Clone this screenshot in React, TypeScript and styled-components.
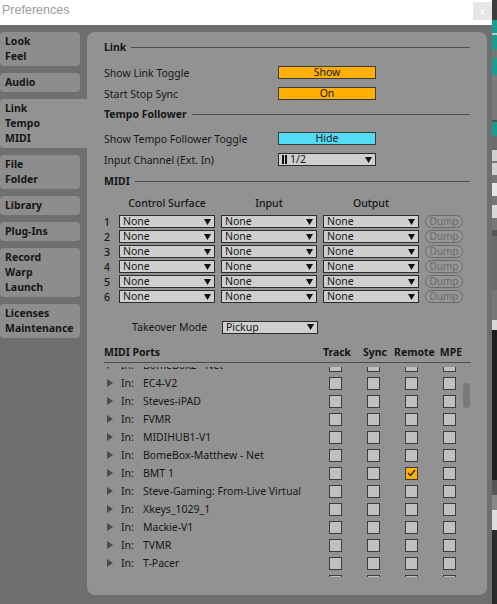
import React from 'react';
import styled, { createGlobalStyle } from 'styled-components';

const GlobalStyle = createGlobalStyle`
  html, body {
    margin: 0;
    padding: 0;
    background: #6f6f6f;
  }
  body {
    font-family: "Noto Sans", "DejaVu Sans", sans-serif;
  }
  * {
    box-sizing: border-box;
  }
`;

const PANEL = '#929292';
const INK = '#161616';

const Screen = styled.div`
  display: flex;
  width: 497px;
  height: 604px;
  overflow: hidden;
`;

const Window = styled.div`
  width: 492px;
  display: flex;
  flex-direction: column;
  background: #6f6f6f;
`;

const TitleBar = styled.div`
  height: 25px;
  flex: none;
  background: #ffffff;
  display: flex;
  align-items: flex-start;
  justify-content: space-between;
  padding-left: 2px;
`;

const Title = styled.span`
  font-family: "Liberation Sans", Arial, sans-serif;
  font-size: 12.5px;
  line-height: 21px;
  color: #9b9b9b;
`;

const CloseButton = styled.div`
  margin-top: 2px;
  width: 19px;
  height: 18px;
  background: #e6e6e6;
  color: #fbfbfb;
  font-family: "Liberation Sans", Arial, sans-serif;
  font-size: 10px;
  display: flex;
  align-items: center;
  justify-content: center;
`;

const Body = styled.div`
  flex: 1;
  display: flex;
  padding-top: 7px;
`;

const Sidebar = styled.div`
  width: 87px;
  flex: none;
  display: flex;
  flex-direction: column;
  align-items: flex-start;
  gap: 7px;
`;

const Tab = styled.div<{ $active?: boolean }>`
  width: ${p => (p.$active ? '87px' : '80px')};
  background: ${p => (p.$active ? PANEL : '#8d8d8d')};
  border-radius: ${p => (p.$active ? '4px 0 0 4px' : '4px')};
  padding: 2px 5px;
  font-size: 10.5px;
  font-weight: 700;
  line-height: 15px;
  color: ${INK};
`;

const Panel = styled.div`
  width: 400px;
  height: 563px;
  flex: none;
  background: ${PANEL};
  border-radius: 8px;
  padding: 5px 16px 0 17px;
  display: flex;
  flex-direction: column;
  font-size: 10.5px;
  color: ${INK};
`;

const SectionHeading = styled.div<{ $after?: number }>`
  height: 20px;
  display: flex;
  align-items: center;
  gap: 5px;
  font-weight: 700;
  margin-bottom: ${p => p.$after ?? 5}px;

  &::after {
    content: '';
    flex: 1;
    height: 1px;
    background: #4d4d4d;
    margin-right: 1px;
  }
`;

const SettingRow = styled.div`
  height: 21px;
  display: flex;
  align-items: center;
`;

const SettingLabel = styled.span`
  width: 174px;
`;

const ToggleButton = styled.div<{ $color: string }>`
  width: 98px;
  height: 13px;
  background: ${p => p.$color};
  border: 1px solid #3a3a3a;
  text-align: center;
  line-height: 11px;
  font-size: 10.5px;
`;

const Select = styled.div<{ $width: number }>`
  width: ${p => p.$width}px;
  height: 13px;
  background: #cfcfcf;
  border: 1px solid #2c2c2c;
  display: flex;
  align-items: center;
  gap: 3px;
  padding: 0 3px;
  font-size: 10.5px;
  line-height: 11px;

  & > span {
    flex: 1;
  }
`;

const Arrow = () => (
  <svg width="7" height="6" viewBox="0 0 7 6">
    <polygon points="0,0 7,0 3.5,6" fill="#111" />
  </svg>
);

const ChannelBars = () => (
  <svg width="5" height="9" viewBox="0 0 5 9">
    <rect x="0" y="0" width="2" height="9" fill="#111" />
    <rect x="3" y="0" width="2" height="9" fill="#111" />
  </svg>
);

const MidiGrid = styled.div`
  display: grid;
  grid-template-columns: 9px 96px 96px 96px 38px;
  column-gap: 6px;
  grid-auto-rows: 15px;
  align-items: center;
`;

const ColumnHead = styled.div`
  text-align: center;
  font-weight: 500;
`;

const MidiHeader = styled(MidiGrid)`
  margin-top: 4px;
  margin-bottom: 3px;
  grid-auto-rows: 16px;
`;

const RowNumber = styled.span`
  font-weight: 500;
`;

const DumpButton = styled.div`
  height: 13px;
  border: 1px solid #6a6a6a;
  border-radius: 7px;
  background: #969696;
  color: #6c6c6c;
  font-size: 10px;
  line-height: 11px;
  text-align: center;
`;

const TakeoverRow = styled.div`
  height: 16px;
  margin-top: 15px;
  padding-left: 28px;
  display: flex;
  align-items: center;
`;

const TakeoverLabel = styled.span`
  width: 90px;
`;

const PortsGrid = styled.div`
  display: grid;
  grid-template-columns: 1fr 38px 38px 38px 38px;
  align-items: center;
  padding-right: 3px;
`;

const PortsHeader = styled(PortsGrid)`
  margin-top: 8px;
  height: 20px;
  border-bottom: 1px solid #4d4d4d;
  padding-right: 1px;
  font-weight: 700;
  padding-bottom: 1px;

  & > span + span {
    text-align: center;
  }
`;

const PortsViewport = styled.div`
  position: relative;
  margin-top: 4px;
  height: 210px;
  overflow: hidden;
`;

const PortsList = styled.div`
  margin-top: -11px;
`;

const PortRow = styled(PortsGrid)`
  height: 18px;
`;

const PortName = styled.div`
  display: flex;
  align-items: center;
  padding-left: 3px;
  white-space: nowrap;
`;

const Disclosure = () => (
  <svg width="6" height="8" viewBox="0 0 6 8" style={{ marginRight: 8 }}>
    <polygon points="0,0 6,4 0,8" fill="#4a4a4a" />
  </svg>
);

const InLabel = styled.span`
  width: 22px;
`;

const Checkbox = styled.div<{ $checked?: boolean }>`
  justify-self: center;
  width: 13px;
  height: 13px;
  background: ${p => (p.$checked ? '#ffb000' : '#c0c0c0')};
  border: 1px solid #3c3c3c;
  display: flex;
  align-items: center;
  justify-content: center;
`;

const Tick = () => (
  <svg width="9" height="8" viewBox="0 0 9 8">
    <polyline points="1,4 3.5,6.5 8,1" fill="none" stroke="#222" strokeWidth="1.3" />
  </svg>
);

const ScrollThumb = styled.div`
  position: absolute;
  right: 1px;
  top: 16px;
  width: 7px;
  height: 25px;
  border-radius: 4px;
  background: #7a7a7a;
`;

const Strip = styled.div`
  width: 5px;
  flex: none;
  display: flex;
  flex-direction: column;
`;

const StripPart = styled.div<{ $h: number; $c: string }>`
  height: ${p => p.$h}px;
  flex: none;
  background: ${p => p.$c};
`;

const tabs = [
  ['Look', 'Feel'],
  ['Audio'],
  ['Link', 'Tempo', 'MIDI'],
  ['File', 'Folder'],
  ['Library'],
  ['Plug-Ins'],
  ['Record', 'Warp', 'Launch'],
  ['Licenses', 'Maintenance'],
];

const ports = [
  'BomeBox2 - Net',
  'EC4-V2',
  'Steves-iPAD',
  'FVMR',
  'MIDIHUB1-V1',
  'BomeBox-Matthew - Net',
  'BMT 1',
  'Steve-Gaming: From-Live Virtual',
  'Xkeys_1029_1',
  'Mackie-V1',
  'TVMR',
  'T-Pacer',
  'UM-ONE',
];

const strip: [number, string][] = [
  [20, '#3d3d3d'],
  [13, '#17a08f'],
  [2, '#c8c8c8'],
  [15, '#17a08f'],
  [8, '#777777'],
  [17, '#17a08f'],
  [45, '#7a7a7a'],
  [2, '#555555'],
  [14, '#17a08f'],
  [14, '#6c6c6c'],
  [11, '#d0d0d0'],
  [2, '#777777'],
  [12, '#d0d0d0'],
  [8, '#777777'],
  [13, '#e6e6e6'],
  [9, '#777777'],
  [13, '#d8d8d8'],
  [12, '#777777'],
  [6, '#555555'],
  [54, '#6a6a6a'],
  [30, '#777777'],
  [10, '#d6d6d6'],
  [150, '#1e1e1e'],
  [15, '#555555'],
  [15, '#888888'],
  [20, '#dddddd'],
  [74, '#2a2a2a'],
];

export default function App() {
  return (
    <>
      <GlobalStyle />
      <Screen>
        <Window>
          <TitleBar>
            <Title>Preferences</Title>
            <CloseButton>x</CloseButton>
          </TitleBar>
          <Body>
            <Sidebar>
              {tabs.map((lines, i) => (
                <Tab key={i} $active={i === 2}>
                  {lines.map(l => (
                    <div key={l}>{l}</div>
                  ))}
                </Tab>
              ))}
            </Sidebar>
            <Panel>
              <SectionHeading>Link</SectionHeading>
              <SettingRow>
                <SettingLabel>Show Link Toggle</SettingLabel>
                <ToggleButton $color="#ffb000">Show</ToggleButton>
              </SettingRow>
              <SettingRow>
                <SettingLabel>Start Stop Sync</SettingLabel>
                <ToggleButton $color="#ffb000">On</ToggleButton>
              </SettingRow>

              <SectionHeading $after={4}>Tempo Follower</SectionHeading>
              <SettingRow>
                <SettingLabel>Show Tempo Follower Toggle</SettingLabel>
                <ToggleButton $color="#55dcf5">Hide</ToggleButton>
              </SettingRow>
              <SettingRow>
                <SettingLabel>Input Channel (Ext. In)</SettingLabel>
                <Select $width={98}>
                  <ChannelBars />
                  <span>1/2</span>
                  <Arrow />
                </Select>
              </SettingRow>

              <SectionHeading $after={0} style={{ marginTop: 1 }}>MIDI</SectionHeading>
              <MidiHeader>
                <span />
                <ColumnHead>Control Surface</ColumnHead>
                <ColumnHead>Input</ColumnHead>
                <ColumnHead>Output</ColumnHead>
                <span />
              </MidiHeader>
              <MidiGrid>
                {[1, 2, 3, 4, 5, 6].map(n => (
                  <React.Fragment key={n}>
                    <RowNumber>{n}</RowNumber>
                    {[0, 1, 2].map(c => (
                      <Select key={c} $width={96}>
                        <span>None</span>
                        <Arrow />
                      </Select>
                    ))}
                    <DumpButton>Dump</DumpButton>
                  </React.Fragment>
                ))}
              </MidiGrid>

              <TakeoverRow>
                <TakeoverLabel>Takeover Mode</TakeoverLabel>
                <Select $width={96}>
                  <span>Pickup</span>
                  <Arrow />
                </Select>
              </TakeoverRow>

              <PortsHeader>
                <span>MIDI Ports</span>
                <span>Track</span>
                <span>Sync</span>
                <span>Remote</span>
                <span>MPE</span>
              </PortsHeader>
              <PortsViewport>
                <PortsList>
                  {ports.map(name => (
                    <PortRow key={name}>
                      <PortName>
                        <Disclosure />
                        <InLabel>In:</InLabel>
                        <span>{name}</span>
                      </PortName>
                      {[0, 1, 2, 3].map(c => {
                        const checked = name === 'BMT 1' && c === 2;
                        return (
                          <Checkbox key={c} $checked={checked}>
                            {checked && <Tick />}
                          </Checkbox>
                        );
                      })}
                    </PortRow>
                  ))}
                </PortsList>
                <ScrollThumb />
              </PortsViewport>
            </Panel>
          </Body>
        </Window>
        <Strip>
          {strip.map(([h, c], i) => (
            <StripPart key={i} $h={h} $c={c} />
          ))}
        </Strip>
      </Screen>
    </>
  );
}
